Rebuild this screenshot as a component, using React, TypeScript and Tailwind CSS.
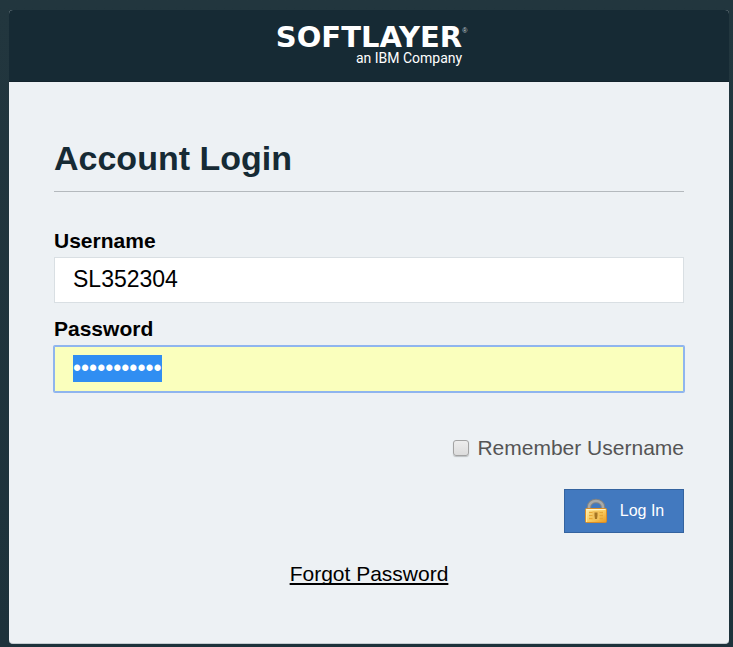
import { useEffect, useRef } from "react";

function Logo() {
  return (
    <div className="flex flex-col items-end text-white">
      <div className="flex h-[23px] items-center">
        <span className="font-['DejaVu_Sans',sans-serif] text-[29px] leading-[23px] font-bold">SOFTLAYER</span>
        <span className="w-0 self-start text-[7px] leading-[10px] text-[#c3cacf]">®</span>
      </div>
      <span className="font-[Roboto,sans-serif] text-[14px] leading-[18px]">an IBM Company</span>
    </div>
  );
}

function LockIcon() {
  return (
    <svg width="24" height="26" viewBox="0 0 24 26" aria-hidden="true">
      <defs>
        <linearGradient id="gold" x1="0" y1="0" x2="1" y2="1">
          <stop offset="0" stopColor="#fff0b0" />
          <stop offset="0.5" stopColor="#fbcf62" />
          <stop offset="1" stopColor="#ea9a20" />
        </linearGradient>
      </defs>
      <path d="M5 12V9a7 6 0 0 1 14 0v3" fill="none" stroke="#7d8287" strokeWidth="4.5" />
      <path d="M5 12V9a7 6 0 0 1 14 0v3" fill="none" stroke="#a9aaa8" strokeWidth="2.5" />
      <rect x="1.5" y="10.5" width="21" height="14" rx="1" fill="url(#gold)" stroke="#d98d28" />
      <path d="M2.5 11.5h19" stroke="#fff6cf" />
      <path d="M2.5 12v12" stroke="#ffe9a0" />
      <path d="M5 14.5h14M5 17.5h14M5 20.5h14" stroke="#e7a734" strokeWidth="1.5" />
      <rect x="8.5" y="13" width="7" height="9" fill="#f2c25c" />
      <path d="M10.5 14.5h3v3l-.5 3.5h-2l-.5-3.5z" fill="#a57524" />
    </svg>
  );
}

export default function App() {
  const password = useRef<HTMLInputElement>(null);

  useEffect(() => {
    password.current?.focus();
    password.current?.select();
  }, []);

  return (
    <div className="min-h-screen bg-linear-to-b from-[#22363e] to-[#1d323b] pt-[10px] pr-1 pb-[3px] pl-[9px] font-['Liberation_Sans',Arial,sans-serif]">
      <main className="overflow-hidden rounded border-b border-[#c5ccd0] bg-[#edf1f4]">
        <header className="flex h-[72px] justify-center border-b border-[#13232c] bg-[#162a34] pt-4">
          <Logo />
        </header>
        <form className="px-[45px] pb-14" onSubmit={(e) => e.preventDefault()}>
          <h1 className="border-b border-[#b4b9bd] pt-14 pb-3 text-[34px] leading-[41px] font-bold text-[#162a34]">
            Account Login
          </h1>

          <label htmlFor="username" className="mt-9 block text-[21px] leading-[26px] font-bold text-black">
            Username
          </label>
          <input
            id="username"
            type="text"
            defaultValue="SL352304"
            className="mt-[3px] block h-[46px] w-full border border-[#d9dfe3] bg-white px-[18px] pb-0.5 text-[23px] text-black outline-none"
          />

          <label htmlFor="password" className="mt-[13px] block text-[21px] leading-[26px] font-bold text-black">
            Password
          </label>
          <input
            id="password"
            ref={password}
            type="password"
            defaultValue="softlayer12"
            className="mt-1 block h-[46px] w-full rounded-[1px] border border-[#8fb5ee] bg-[#faffbd] px-[18px] pb-0.5 text-[23px] text-black ring-1 ring-[#8fb5ee] outline-none selection:bg-[#308ef2] selection:text-white"
          />

          <div className="mt-[43px] flex items-center justify-end gap-2">
            <input
              id="remember"
              type="checkbox"
              className="size-4 appearance-none rounded-[3px] border border-[#a3a3a3] bg-linear-to-b from-[#ededed] to-[#dcdcdc] shadow-[0_1px_1px_#bcc0c2]"
            />
            <label htmlFor="remember" className="text-[21px] leading-[26px] text-[#555555]">
              Remember Username
            </label>
          </div>

          <div className="mt-7 flex justify-end">
            <button
              type="submit"
              className="flex h-11 w-[120px] items-center justify-center gap-3 border border-[#34639f] bg-[#4279bf] text-[16px] text-white"
            >
              <LockIcon />
              Log In
            </button>
          </div>

          <div className="mt-[27px] text-center text-[21px] leading-[27px]">
            <a
              href="#forgot"
              className="text-black underline decoration-2 underline-offset-2 [text-decoration-skip-ink:none]"
            >
              Forgot Password
            </a>
          </div>
        </form>
      </main>
    </div>
  );
}
